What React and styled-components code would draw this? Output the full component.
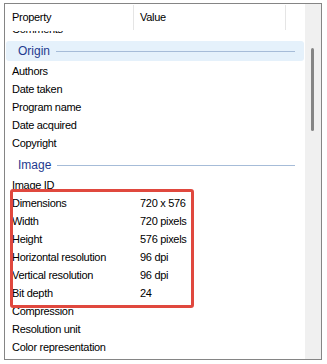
import React from "react";
import styled, { createGlobalStyle } from "styled-components";

const sections = [
  { rows: [["Comments", ""]] },
  {
    title: "Origin",
    active: true,
    rows: [
      ["Authors", ""],
      ["Date taken", ""],
      ["Program name", ""],
      ["Date acquired", ""],
      ["Copyright", ""],
    ],
  },
  {
    title: "Image",
    rows: [
      ["Image ID", ""],
      ["Dimensions", "720 x 576"],
      ["Width", "720 pixels"],
      ["Height", "576 pixels"],
      ["Horizontal resolution", "96 dpi"],
      ["Vertical resolution", "96 dpi"],
      ["Bit depth", "24"],
      ["Compression", ""],
      ["Resolution unit", ""],
      ["Color representation", ""],
    ],
  },
];

const App = () => {
  return (
    <>
      <GlobalStyle />
      <Frame>
        <Main>
          <Header>
            <HeadCell width="129px">Property</HeadCell>
            <HeadCell width="152px">Value</HeadCell>
          </Header>
          <List>
            <Scroller>
              {sections.map((s, i) => (
                <React.Fragment key={i}>
                  {s.title && (
                    <Group>
                      <GroupBand active={s.active}>
                        <GroupLabel>{s.title}</GroupLabel>
                        <GroupLine />
                      </GroupBand>
                    </Group>
                  )}
                  {s.rows.map(([name, value]) => (
                    <Row key={name}>
                      <Name>{name}</Name>
                      <Value>{value}</Value>
                    </Row>
                  ))}
                </React.Fragment>
              ))}
            </Scroller>
          </List>
        </Main>
        <ScrollBar>
          <Thumb />
        </ScrollBar>
        <Highlight />
      </Frame>
    </>
  );
};

export default App;

const GlobalStyle = createGlobalStyle`
  html, body {
    margin: 0;
    padding: 0;
    background: #ffffff;
  }
  body {
    font-family: "Liberation Sans", Arial, sans-serif;
    color: #000000;
  }
`;

const Frame = styled.div`
  position: relative;
  margin: 3px 0 0 4px;
  width: 316px;
  height: 355px;
  border: 1px solid #858585;
  display: flex;
  background: #ffffff;
`;

const Main = styled.div`
  flex: 1;
  display: flex;
  flex-direction: column;
  overflow: hidden;
`;

const Header = styled.div`
  height: 26px;
  display: flex;
  align-items: stretch;
  padding-top: 1px;
  background: #ffffff;
  flex-shrink: 0;
`;

const HeadCell = styled.div`
  width: ${(p) => p.width};
  box-sizing: border-box;
  padding: 0 0 0 7px;
  display: flex;
  align-items: center;
  font-size: 11px;
  letter-spacing: -0.3px;
  border-right: 1px solid #e5e5e5;
  margin-bottom: 1px;
  padding-bottom: 1px;
  & + & {
    padding-left: 6px;
  }
`;

const List = styled.div`
  flex: 1;
  overflow: hidden;
`;

const Scroller = styled.div`
  margin-top: -11px;
`;

const Row = styled.div`
  height: 18px;
  display: grid;
  grid-template-columns: 129px 1fr;
  align-items: center;
  font-size: 11px;
  letter-spacing: -0.3px;
  white-space: nowrap;
`;

const Name = styled.div`
  padding-left: 7px;
`;

const Value = styled.div`
  padding-left: 6px;
`;

const Group = styled.div`
  height: 24px;
  box-sizing: border-box;
  padding: 3px 1px 1px 1px;
`;

const GroupBand = styled.div`
  height: 20px;
  border-radius: 3px;
  background: ${(p) => (p.active ? "#e5f1fb" : "transparent")};
  display: flex;
  align-items: center;
  padding: 0 9px 0 12px;
`;

const GroupLabel = styled.span`
  font-size: 12px;
  color: #1e3a8f;
  margin-right: 6px;
`;

const GroupLine = styled.div`
  flex: 1;
  height: 1px;
  background: #a6bcd8;
`;

const ScrollBar = styled.div`
  width: 16px;
  background: #f0f0f0;
  position: relative;
  flex-shrink: 0;
`;

const Thumb = styled.div`
  position: absolute;
  left: 6px;
  top: 44px;
  width: 3px;
  height: 83px;
  border-radius: 2px;
  background: #858585;
`;

const Highlight = styled.div`
  position: absolute;
  left: 5px;
  top: 185px;
  width: 184px;
  height: 119px;
  box-sizing: border-box;
  border: 3px solid #e0483e;
  border-radius: 3px;
  pointer-events: none;
`;
